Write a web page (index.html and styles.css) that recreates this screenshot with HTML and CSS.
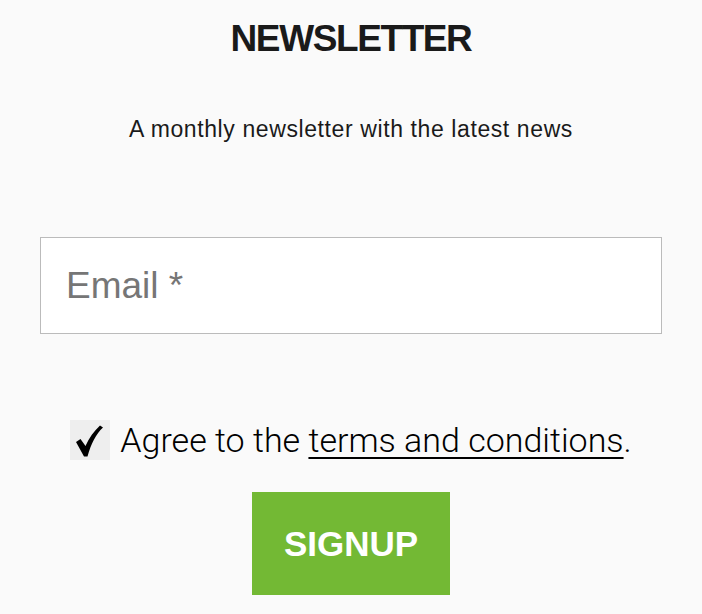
FILE: index.html
```html
<!DOCTYPE html>
<html lang="en">
<head>
<meta charset="utf-8">
<title>Newsletter</title>
<link rel="stylesheet" href="styles.css">
</head>
<body>
<main class="newsletter">
  <h1 class="title">NEWSLETTER</h1>
  <p class="subtitle">A monthly newsletter with the latest news</p>
  <input class="email" type="email" placeholder="Email *">
  <label class="agree">
    <span class="checkbox">
      <svg class="check" viewBox="0 0 27 32" width="27" height="32" aria-hidden="true">
        <path d="M0 17 L4.5 14 L9.5 21 C13 13 18 6 24 0.5 L27 2.5 C20 9 15 19 11.5 31.5 L8 31.5 Z" fill="#000"/>
      </svg>
    </span>
    <span class="agree-text">Agree to the <a class="terms" href="#">terms and conditions</a>.</span>
  </label>
  <button class="signup" type="button">SIGNUP</button>
</main>
</body>
</html>
```
FILE: styles.css
```css
html, body {
  margin: 0;
  padding: 0;
  background: #fafafa;
}

body {
  font-family: "Liberation Sans", Arial, sans-serif;
  color: #1a1a1a;
}

.newsletter {
  display: flex;
  flex-direction: column;
  align-items: center;
  padding-top: 20px;
}

.title {
  margin: 0;
  font-size: 37px;
  line-height: 37px;
  font-weight: 700;
  letter-spacing: -1.4px;
  color: #1a1a1a;
}

.subtitle {
  margin: 61px 0 0;
  font-size: 23px;
  line-height: 23px;
  letter-spacing: 0.6px;
  color: #1a1a1a;
}

.email {
  box-sizing: border-box;
  margin-top: 96px;
  width: 622px;
  height: 97px;
  border: 1px solid #bbbbbb;
  background: #ffffff;
  padding: 0 25px;
  font-family: "Liberation Sans", Arial, sans-serif;
  font-size: 37px;
  color: #1a1a1a;
  outline: none;
}

.email::placeholder {
  color: #767676;
  opacity: 1;
}

.agree {
  display: flex;
  align-items: center;
  gap: 10px;
  margin-top: 86px;
  height: 40px;
}

.checkbox {
  display: flex;
  align-items: center;
  justify-content: center;
  width: 40px;
  height: 40px;
  background: #eeeeee;
}

.check {
  display: block;
  margin-left: -2px;
  margin-top: 1px;
}

.agree-text {
  font-family: "Roboto", "Liberation Sans", sans-serif;
  font-weight: 300;
  font-size: 34px;
  line-height: 40px;
  color: #000;
}

.terms {
  color: #000;
  text-decoration: underline;
  text-decoration-thickness: 2px;
  text-underline-offset: 5px;
}

.signup {
  margin-top: 32px;
  width: 198px;
  height: 103px;
  border: none;
  background: #73b934;
  color: #ffffff;
  font-family: "Liberation Sans", Arial, sans-serif;
  font-weight: 700;
  font-size: 35px;
  padding: 0;
  cursor: pointer;
}
```
